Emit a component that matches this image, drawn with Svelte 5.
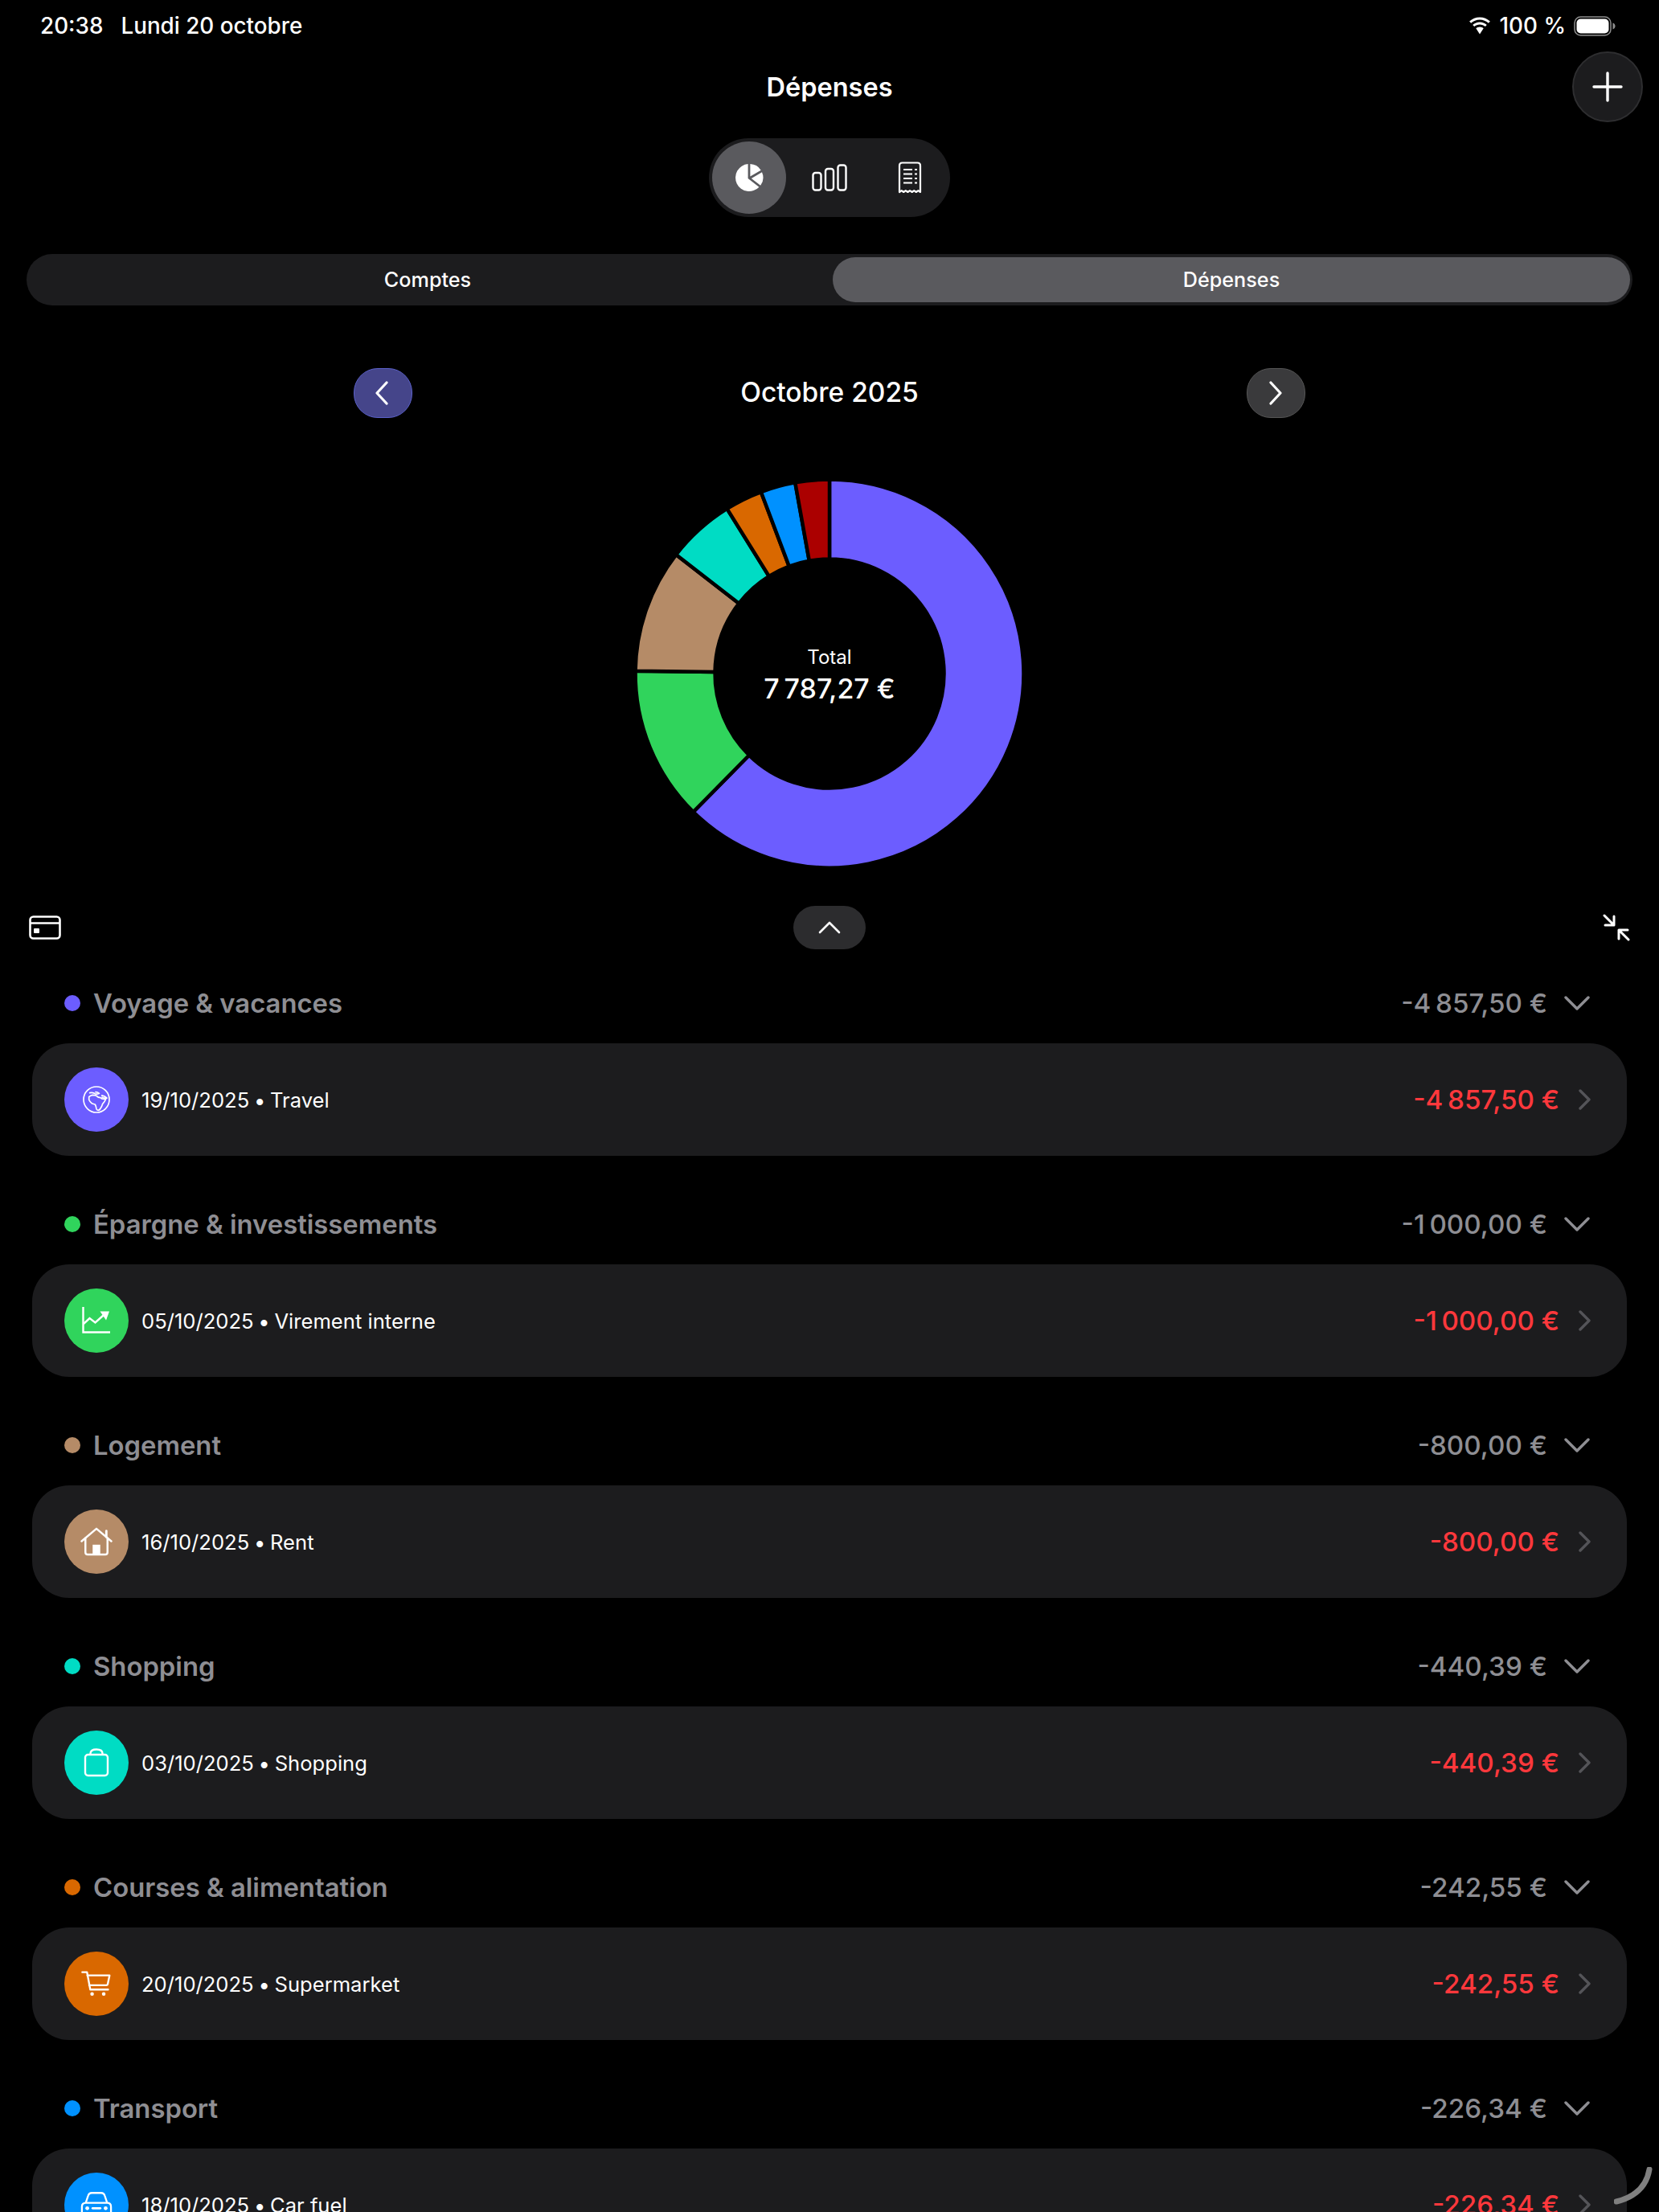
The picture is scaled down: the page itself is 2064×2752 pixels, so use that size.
<script>
  const categories = [
    { name: 'Voyage & vacances', total: '-4\u202f857,50 €', date: '19/10/2025', label: 'Travel', color: '#6c5dff', icon: 'globe' },
    { name: 'Épargne & investissements', total: '-1\u202f000,00 €', date: '05/10/2025', label: 'Virement interne', color: '#30d45c', icon: 'chart' },
    { name: 'Logement', total: '-800,00 €', date: '16/10/2025', label: 'Rent', color: '#b58b67', icon: 'house' },
    { name: 'Shopping', total: '-440,39 €', date: '03/10/2025', label: 'Shopping', color: '#00dcc4', icon: 'bag' },
    { name: 'Courses & alimentation', total: '-242,55 €', date: '20/10/2025', label: 'Supermarket', color: '#d96800', icon: 'cart' },
    { name: 'Transport', total: '-226,34 €', date: '18/10/2025', label: 'Car fuel', color: '#0091ff', icon: 'car' }
  ]

  const slices = [
    { value: 4857.5, color: '#6c5dff' },
    { value: 1000, color: '#30d45c' },
    { value: 800, color: '#b58b67' },
    { value: 440.39, color: '#00dcc4' },
    { value: 242.55, color: '#d96800' },
    { value: 226.34, color: '#0091ff' },
    { value: 220.49, color: '#ab0000' }
  ]

  const total = slices.reduce((sum, s) => sum + s.value, 0)
  const outer = 241.5
  const inner = 142.5

  function point(r, angle) {
    return `${(r * Math.sin(angle)).toFixed(2)} ${(-r * Math.cos(angle)).toFixed(2)}`
  }

  function arc(start, end) {
    const large = end - start > Math.PI ? 1 : 0
    return `M${point(outer, start)} A${outer} ${outer} 0 ${large} 1 ${point(outer, end)} L${point(inner, end)} A${inner} ${inner} 0 ${large} 0 ${point(inner, start)} Z`
  }

  let acc = 0
  const paths = slices.map((s) => {
    const start = (acc / total) * Math.PI * 2
    acc += s.value
    return { d: arc(start, (acc / total) * Math.PI * 2), color: s.color }
  })
</script>

<div class="screen">
  <header class="status">
    <div class="status-left"><span>20:38</span><span>Lundi 20 octobre</span></div>
    <div class="status-right">
      <svg width="30" height="22" viewBox="0 0 30 22" fill="#fff">
        <path d="M15 3.5c4.2 0 8 1.6 10.9 4.3l2-2.2C24.400 2.400 19.900.5 15 .5S5.600 2.400 2.100 5.600l2 2.200C7 5.100 10.800 3.500 15 3.500z"/>
        <path d="M15 9.500c2.600 0 5 1 6.800 2.600l2-2.200C21.400 7.800 18.300 6.500 15 6.500S8.600 7.800 6.200 9.900l2 2.200C10 10.500 12.400 9.500 15 9.500z"/>
        <path d="M15 12.500c-1.800 0-3.400.7-4.700 1.800L15 21.500l4.700-7.200c-1.300-1.100-2.900-1.800-4.700-1.800z"/>
      </svg>
      <span>100 %</span>
      <svg width="52" height="25" viewBox="0 0 52 25">
        <rect x="1" y="1" width="45" height="23" rx="7.500" fill="none" stroke="#8e8e8e" stroke-width="1.500"/>
        <rect x="3.500" y="3.500" width="40" height="18" rx="5" fill="#fff"/>
        <path d="M48.500 8.500c2 .6 3 2.200 3 4s-1 3.400-3 4z" fill="#8e8e8e"/>
      </svg>
    </div>
  </header>

  <div class="nav">
    <h1>Dépenses</h1>
    <button class="plus" aria-label="Ajouter">
      <svg width="38" height="38" viewBox="0 0 38 38" stroke="#fff" stroke-width="3.400" stroke-linecap="round"><path d="M19 2v34M2 19h34"/></svg>
    </button>
  </div>

  <div class="views">
    <div class="view active">
      <svg width="36" height="36" viewBox="0 0 36 36" fill="#fff">
        <path d="M16.600 1.100A17 17 0 1 0 30.400 29.700L16.600 19z"/>
        <path d="M19.400 1.100V16.400l13.300-7.700A17 17 0 0 0 19.400 1.100z"/>
        <path d="M34 11.200l-13.200 7.700 11.400 8.900A17 17 0 0 0 34 11.200z"/>
      </svg>
    </div>
    <div class="view">
      <svg width="44" height="34" viewBox="0 0 44 34" fill="none" stroke="#fff" stroke-width="2.400">
        <rect x="1.500" y="11" width="10" height="21.500" rx="3"/>
        <rect x="17" y="6" width="10" height="26.500" rx="3"/>
        <rect x="32.500" y="1.500" width="10" height="31" rx="3"/>
      </svg>
    </div>
    <div class="view">
      <svg width="30" height="40" viewBox="0 0 30 40" fill="none" stroke="#fff" stroke-width="2.200">
        <path d="M2 38V5q0-3.500 3.500-3.500h19Q28 1.500 28 5v33l-2.600-1.800-2.600 1.800-2.600-1.800-2.500 1.800-2.700-1.800-2.600 1.800-2.600-1.800-2.600 1.800-2.500-1.800z" stroke-linejoin="round"/>
        <path d="M7 10h11M7 15.500h11M7 21h11M7 26.500h11M21 10h3M21 15.500h3M21 21h3M21 26.500h3"/>
      </svg>
    </div>
  </div>

  <div class="tabs">
    <div class="tab">Comptes</div>
    <div class="tab active">Dépenses</div>
  </div>

  <div class="month">
    <button class="arrow prev" aria-label="Précédent">
      <svg width="18" height="30" viewBox="0 0 18 30" fill="none" stroke="#fff" stroke-width="3.200" stroke-linecap="round" stroke-linejoin="round"><path d="M15 2L3 15l12 13"/></svg>
    </button>
    <h2>Octobre 2025</h2>
    <button class="arrow next" aria-label="Suivant">
      <svg width="18" height="30" viewBox="0 0 18 30" fill="none" stroke="#fff" stroke-width="3.200" stroke-linecap="round" stroke-linejoin="round"><path d="M3 2l12 13L3 28"/></svg>
    </button>
  </div>

  <div class="chart">
    <svg width="490" height="490" viewBox="-245 -245 490 490">
      {#each paths as p}
        <path d={p.d} fill={p.color} stroke="#000" stroke-width="4.500"/>
      {/each}
    </svg>
    <div class="chart-label">
      <span class="chart-title">Total</span>
      <span class="chart-value">7&#8239;787,27 €</span>
    </div>
  </div>

  <div class="tools">
    <svg width="40" height="30" viewBox="0 0 40 30" fill="none" stroke="#fff" stroke-width="2.600">
      <rect x="1.500" y="1.500" width="37" height="27" rx="4"/>
      <path d="M1.500 9.500h37"/>
      <rect x="6" y="16" width="7" height="6" rx="1" fill="#fff" stroke="none"/>
    </svg>
    <div class="collapse">
      <svg width="28" height="16" viewBox="0 0 28 16" fill="none" stroke="#fff" stroke-width="2.600" stroke-linecap="round" stroke-linejoin="round"><path d="M2 14L14 2l12 12"/></svg>
    </div>
    <svg class="expand" width="34" height="34" viewBox="0 0 34 34" fill="none" stroke="#fff" stroke-width="3" stroke-linecap="round" stroke-linejoin="round">
      <path d="M2 2l11.500 11.500M3 14h11V3M32 32L20.500 20.500M31 20H20v11"/>
    </svg>
  </div>

  <div class="list">
    {#each categories as c}
      <section>
        <div class="cat">
          <span class="dot" style="background: {c.color}"></span>
          <span class="cat-name">{c.name}</span>
          <span class="cat-total">{c.total}</span>
          <svg width="32" height="20" viewBox="0 0 32 20" fill="none" stroke="#8e8e93" stroke-width="3.400" stroke-linecap="round" stroke-linejoin="round"><path d="M2 3l14 14L30 3"/></svg>
        </div>
        <div class="card">
          <span class="badge" style="background: {c.color}">
            {#if c.icon === 'globe'}
              <svg width="36" height="36" viewBox="0 0 36 36" fill="none" stroke="#fff" stroke-width="1.700" stroke-linejoin="round" stroke-linecap="round">
                <circle cx="18" cy="18" r="16"/>
                <path d="M8.700 14.700Q10.500 12.800 13 12.300Q15.800 12.300 18 13.300Q20.300 15.800 23 15.700Q24.500 17.800 29.700 17.300Q28.300 20.800 25.700 23.300Q24.800 26.500 23 29Q22 31 20.300 31.300Q18.500 31.200 18 29.700Q17.600 26.500 16.300 24Q14.300 23.600 12.300 22.700Q9.800 21 8.700 18.300Z"/>
                <path d="M9.700 9.700Q13 9 15.500 10.300M17 8.700Q19.500 8.700 21.500 10.300Q19 11.500 16.500 11M24.700 12.800Q28.500 13.500 31 16.200Q27.500 16.500 25 15.200"/>
              </svg>
            {:else if c.icon === 'chart'}
              <svg width="36" height="36" viewBox="0 0 36 36" fill="none" stroke="#fff" stroke-width="2.400">
                <path d="M1.500 1v31.500H35"/>
                <path d="M2 22l7.500-7 7 5.500 10-9"/>
                <path d="M22.500 6.500h11.500l-4 11z" fill="#fff" stroke="none"/>
              </svg>
            {:else if c.icon === 'house'}
              <svg width="40" height="36" viewBox="0 0 42 38" fill="none" stroke="#fff" stroke-width="2.600" stroke-linecap="round" stroke-linejoin="round">
                <path d="M1.500 18.500L21 2l19.500 16.500"/>
                <path d="M6.500 14.500V33q0 3 3 3h23q3 0 3-3V14.500"/>
                <path d="M34 5v8" stroke-width="3"/>
                <rect x="16" y="23" width="10" height="13" fill="#fff" stroke="none"/>
              </svg>
            {:else if c.icon === 'bag'}
              <svg width="32" height="36" viewBox="0 0 32 36" fill="none" stroke="#fff" stroke-width="2.400" stroke-linejoin="round">
                <rect x="2" y="8" width="28" height="26" rx="3.500"/>
                <path d="M8.500 8V6.500q0-5 7.500-5t7.500 5V8"/>
              </svg>
            {:else if c.icon === 'cart'}
              <svg width="38" height="33" viewBox="0 0 42 36" fill="none" stroke="#fff" stroke-width="2.600" stroke-linecap="round" stroke-linejoin="round">
                <path d="M1.500 1.500h6.500l4.500 24h24.500"/>
                <path d="M8.500 6h30.500l-2.500 12q-.3 1.500-2 1.500H11"/>
                <circle cx="15" cy="31.500" r="2.500" fill="#fff" stroke="none"/>
                <circle cx="31" cy="31.500" r="2.500" fill="#fff" stroke="none"/>
              </svg>
            {:else}
              <svg width="40" height="35" viewBox="0 0 42 36" fill="none" stroke="#fff" stroke-width="2.400" stroke-linejoin="round">
                <path d="M7 15l3-9q1-4 5-4h12q4 0 5 4l3 9"/>
                <path d="M2 20q0-5 5-5h28q5 0 5 5v10H2z"/>
                <rect x="2" y="30" width="8" height="5" rx="1.500" fill="#fff" stroke="none"/>
                <rect x="32" y="30" width="8" height="5" rx="1.500" fill="#fff" stroke="none"/>
                <circle cx="9" cy="22" r="2.500" fill="#fff" stroke="none"/>
                <circle cx="33" cy="22" r="2.500" fill="#fff" stroke="none"/>
                <path d="M16 22h10" stroke-width="3" stroke-linecap="round"/>
              </svg>
            {/if}
          </span>
          <span class="card-text">{c.date} <i>•</i> {c.label}</span>
          <span class="card-amount">{c.total}</span>
          <svg class="chev" width="16" height="26" viewBox="0 0 16 26" fill="none" stroke="#545458" stroke-width="3.400" stroke-linecap="round" stroke-linejoin="round"><path d="M2 2l11 11L2 24"/></svg>
        </div>
      </section>
    {/each}
  </div>

  <svg class="corner" width="50" height="50" viewBox="0 0 50 50" fill="none" stroke="#808080" stroke-width="7" stroke-linecap="round"><path d="M44 3Q39 34 3 43"/></svg>
</div>

<style>
  :global(body) {
    margin: 0;
    background: #000;
  }

  .screen {
    position: relative;
    width: 2064px;
    height: 2752px;
    overflow: hidden;
    background: #000;
    color: #fff;
    font-family: Inter, "Liberation Sans", sans-serif;
  }

  .status {
    display: flex;
    justify-content: space-between;
    align-items: center;
    height: 64px;
    padding: 0 54px 0 50px;
    font-size: 27.8px;
    font-weight: 500;
  }

  .status-left {
    display: flex;
    gap: 22px;
  }

  .status-right {
    display: flex;
    align-items: center;
    gap: 10px;
  }

  .nav {
    position: relative;
    display: flex;
    justify-content: center;
    align-items: center;
    height: 88px;
  }

  h1 {
    margin: 0;
    font-size: 32.5px;
    font-weight: 600;
  }

  .plus {
    position: absolute;
    right: 20px;
    top: 0;
    display: flex;
    align-items: center;
    justify-content: center;
    width: 88px;
    height: 88px;
    padding: 0;
    border: 2px solid #2e2e30;
    border-radius: 50%;
    background: #1c1c1e;
  }

  .views {
    display: flex;
    align-items: center;
    justify-content: space-between;
    box-sizing: border-box;
    width: 300px;
    height: 98px;
    margin: 20px auto 0;
    padding: 0 4px;
    border-radius: 49px;
    background: #1c1c1e;
  }

  .view {
    display: flex;
    align-items: center;
    justify-content: center;
    width: 92px;
    height: 90px;
    border-radius: 50%;
  }

  .view.active {
    background: #5a5a5e;
  }

  .tabs {
    display: grid;
    grid-template-columns: 1fr 992px;
    align-items: center;
    box-sizing: border-box;
    height: 64px;
    margin: 46px 33px 0;
    padding: 0 3px 0 0;
    border-radius: 32px;
    background: #1c1c1e;
  }

  .tab {
    display: flex;
    align-items: center;
    justify-content: center;
    box-sizing: border-box;
    height: 56px;
    border-radius: 28px;
    font-size: 25.2px;
    font-weight: 500;
  }

  .tab:first-child {
    padding-right: 5px;
  }

  .tab.active {
    background: #5a5a5e;
  }

  .month {
    display: flex;
    align-items: center;
    justify-content: space-between;
    width: 1184px;
    height: 62px;
    margin: 78px auto 0;
  }

  h2 {
    margin: 0 0 3px;
    font-size: 33.5px;
    font-weight: 500;
  }

  .arrow {
    display: flex;
    align-items: center;
    justify-content: center;
    width: 73px;
    height: 62px;
    padding: 0;
    border-radius: 30px;
  }

  .prev {
    padding-right: 4px;
    border: 1.500px solid #5a60c8;
    background: #45458a;
  }

  .next {
    border: 1.500px solid #555;
    background: #3a3a3c;
  }

  .chart {
    position: relative;
    width: 490px;
    height: 490px;
    margin: 73px auto 0;
  }

  .chart svg {
    display: block;
  }

  .chart-label {
    position: absolute;
    inset: 0;
    display: flex;
    flex-direction: column;
    align-items: center;
    justify-content: center;
    padding-top: 4px;
    box-sizing: border-box;
  }

  .chart-title {
    font-size: 24px;
  }

  .chart-value {
    margin-top: 4px;
    font-size: 34px;
    font-weight: 500;
  }

  .tools {
    display: grid;
    grid-template-columns: 1fr auto 1fr;
    align-items: center;
    height: 54px;
    margin-top: 44px;
    padding: 0 36px;
  }

  .expand {
    justify-self: end;
  }

  .collapse {
    display: flex;
    align-items: center;
    justify-content: center;
    width: 90px;
    height: 54px;
    border-radius: 27px;
    background: #2c2c2e;
  }

  .list {
    display: flex;
    flex-direction: column;
    gap: 35px;
    margin: 0 40px 0 40px;
    padding-top: 17px;
  }

  .cat {
    display: flex;
    align-items: center;
    height: 100px;
    padding: 0 46px 0 40px;
    color: #8e8e93;
  }

  .dot {
    width: 20px;
    height: 20px;
    margin-right: 16px;
    border-radius: 50%;
  }

  .cat-name {
    flex: 1;
    font-size: 32.8px;
    font-weight: 600;
  }

  .cat-total {
    margin-right: 21px;
    font-size: 33.2px;
    font-weight: 500;
  }

  .card {
    display: flex;
    align-items: center;
    height: 140px;
    padding: 0 44px 0 40px;
    border-radius: 46px;
    background: #1c1c1e;
  }

  .badge {
    display: flex;
    align-items: center;
    justify-content: center;
    width: 80px;
    height: 80px;
    margin-right: 16px;
    border-radius: 50%;
  }

  .card-text {
    flex: 1;
    font-size: 25.6px;
  }

  .card-text i {
    font-style: normal;
    margin: 0 -1.500px;
  }

  .card-amount {
    margin-right: 24px;
    color: #ff383c;
    font-size: 33.2px;
    font-weight: 500;
  }

  .corner {
    position: absolute;
    left: 2008px;
    top: 2696px;
  }
</style>
